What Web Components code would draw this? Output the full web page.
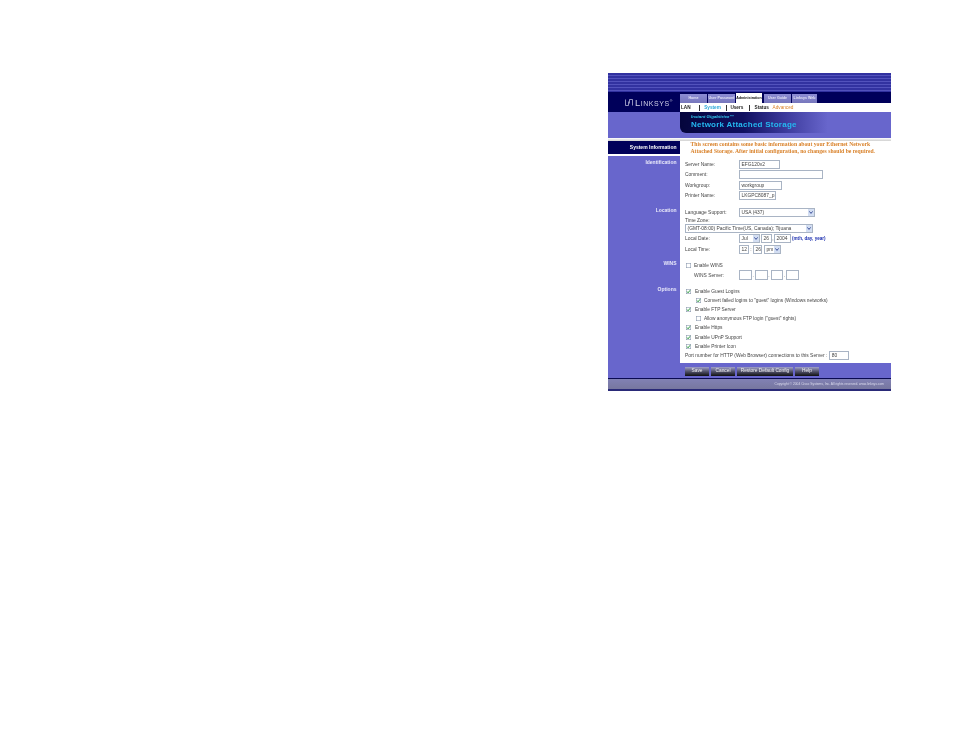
<!DOCTYPE html>
<html>
<head>
<meta charset="utf-8">
<title>System Information</title>
<style>
html, body { margin:0; background:#fff; }
body { padding:73px 0 0 608px; font-family:"Liberation Sans", Arial, sans-serif; height:665px; overflow:hidden; }
</style>
</head>
<body>
<lx-panel>
    <lx-header slot="header"></lx-header>
    <lx-section title="System Information" strong height="15" slot="intro">
        <div style="font:bold 5.67px/6.5px 'Liberation Serif',serif;color:#d9822b;padding:0;white-space:nowrap">This screen contains some basic information about your Ethernet Network<br>Attached Storage. After initial configuration, no changes should be required.</div>
    </lx-section>
    <lx-section title="Identification" height="51" top="3" pad="3">
        <lx-row label="Server Name:" h="10.5"><lx-field w="41">EFG120v2</lx-field></lx-row>
        <lx-row label="Comment:" h="10.5"><lx-field w="84"></lx-field></lx-row>
        <lx-row label="Workgroup:" h="10.5"><lx-field w="43">workgroup</lx-field></lx-row>
        <lx-row label="Printer Name:" h="10.5"><lx-field w="37">LKGPC8087_p1</lx-field></lx-row>
    </lx-section>
    <lx-section title="Location" height="53">
        <lx-row label="Language Support:" h="10"><lx-field select w="76">USA (437)</lx-field></lx-row>
        <lx-row label="Time Zone:" h="6"></lx-row>
        <lx-row h="10"><lx-field select w="128" style="margin-left:-54px">(GMT-08:00) Pacific Time(US, Canada); Tijuana</lx-field></lx-row>
        <lx-row label="Local Date:" h="11">
            <lx-field select w="21">Jul</lx-field><lx-field w="11" style="margin-left:1px">26</lx-field><span style="width:2px;text-align:center">,</span><lx-field w="17">2004</lx-field>
            <span style="font:bold 4.6px 'Liberation Sans',sans-serif;color:#1c2fb0;margin-left:1px;white-space:nowrap">(mth, day, year)</span>
        </lx-row>
        <lx-row label="Local Time:" h="11">
            <lx-field w="10">12</lx-field><span style="width:4px;text-align:center">:</span><lx-field w="9">26</lx-field><lx-field select w="17" style="margin-left:2px">pm</lx-field>
        </lx-row>
    </lx-section>
    <lx-section title="WINS" height="26">
        <lx-check label="Enable WINS" h="10" indent="1" gap="3" open></lx-check>
        <lx-row label="WINS Server:" h="10" indent="9">
            <lx-field w="12.5" tall></lx-field><span style="width:3.5px;text-align:center">.</span><lx-field w="12.5" tall></lx-field><span style="width:3px;text-align:center">.</span><lx-field w="12.5" tall></lx-field><span style="width:3px;text-align:center">.</span><lx-field w="12.5" tall></lx-field>
        </lx-row>
    </lx-section>
    <lx-section title="Options" height="77">
        <lx-check label="Enable Guest Logins" h="10" indent="1"></lx-check>
        <lx-check label="Convert failed logins to &quot;guest&quot; logins (Windows networks)" h="8.5" indent="11" gap="3"></lx-check>
        <lx-check label="Enable FTP Server" h="9.5" indent="1"></lx-check>
        <lx-check label="Allow anonymous FTP login (&quot;guest&quot; rights)" h="9" indent="11" gap="3" open></lx-check>
        <lx-check label="Enable Https" h="9.5" indent="1"></lx-check>
        <lx-check label="Enable UPnP Support" h="9" indent="1"></lx-check>
        <lx-check label="Enable Printer Icon" h="9" indent="1"></lx-check>
        <lx-row h="10.5" wide label="Port number for HTTP (Web Browser) connections to this Server :"><lx-field w="20" style="margin-left:2px">80</lx-field></lx-row>
    </lx-section>
    <lx-footer slot="footer"></lx-footer>
</lx-panel>

<script>
const baseFont = `font-family:"Liberation Sans",Arial,sans-serif;`;

customElements.define('lx-panel', class extends HTMLElement {
    constructor() {
        super();
        this.attachShadow({ mode: 'open' }).innerHTML = `
        <style>
        :host { display:flex; flex-direction:column; width:283px; height:318px; filter:blur(.3px); ${baseFont} }
        #body { flex:1 1 auto; display:flex; flex-direction:column; min-height:0; }
        </style>
        <slot name="header"></slot>
        <slot name="intro"></slot>
        <div id="body"><slot></slot></div>
        <slot name="footer"></slot>
        `;
    }
});

customElements.define('lx-header', class extends HTMLElement {
    constructor() {
        super();
        this.attachShadow({ mode: 'open' }).innerHTML = `
        <style>
        :host { display:block; }
        #stripes {
            height:19px;
            background:repeating-linear-gradient(to bottom,#3232a0 0,#3232a0 2px,#5252bc 2px,#5252bc 3px);
        }
        #top { display:flex; height:20px; background:#00005a; }
        #logo { width:72px; display:flex; align-items:center; gap:2px; padding:0 0 0 17px; box-sizing:border-box; color:#cfcfe6; font-size:9.4px; font-variant:small-caps; letter-spacing:.55px; white-space:nowrap; }
        #nav { flex:1; display:flex; flex-direction:column; }
        #tabs { height:11px; display:flex; align-items:flex-end; }
        .tab { height:9px; line-height:9px; margin-right:1px; background:linear-gradient(to bottom,#8d8dd4,#7676bc); color:#e4e4f6; font-size:3.6px; font-weight:bold; text-align:center; white-space:nowrap; }
        .tab.on { background:#fff; color:#111; height:10px; line-height:10px; margin-right:2px; }
        #sub { height:9px; background:#fff; display:flex; align-items:center; font-size:4.7px; font-weight:bold; color:#222; padding-left:1px; }
        #sub span { white-space:nowrap; flex:none; }
        #sub i { width:.7px; height:6px; background:#333; flex:none; }
        #band { height:26px; display:flex; background:#6866cc; }
        #title { margin-left:72px; flex:1; height:21px; box-sizing:border-box; padding:2px 0 0 11px; border-radius:0 0 0 6px;
            background:linear-gradient(to right,#05053c 0,#101060 30%,#3c3a9c 50%,#6866cc 70%); }
        #title small { display:block; font:italic bold 4.4px/5.5px "Liberation Sans",sans-serif; color:#35c8ee; }
        #title b { display:block; font-size:8px; line-height:9px; color:#24b8f0; letter-spacing:.25px; white-space:nowrap; }
        #rule { height:3px; background:linear-gradient(to bottom,#fff,#d0d0d0); }
        </style>
        <div id="stripes"></div>
        <div id="top">
            <div id="logo">
                <svg width="8" height="7" viewBox="0 0 8 7" fill="none" stroke="#cfcfe6" stroke-width=".7"><path d="M.5.5V6.5H3.5V2.5M7.5 6.5V.5H4.5V4.5"/></svg>
                <span>Linksys<sup style="font-size:3.5px">®</sup></span>
            </div>
            <div id="nav">
                <div id="tabs">
                    <div class="tab" style="width:27px">Home</div>
                    <div class="tab" style="width:27px">User Password</div>
                    <div class="tab on" style="width:26px">Administration</div>
                    <div class="tab" style="width:27px">User Guide</div>
                    <div class="tab" style="width:25px">Linksys Web</div>
                </div>
                <div id="sub">
                    <span style="width:18px">LAN</span><i></i><span style="color:#2aa8d8;margin-left:4.5px;width:21.5px">System</span><i></i><span style="margin-left:4px;width:18.5px">Users</span><i></i><span style="margin-left:5px;width:18px">Status</span><span style="color:#d9822b;font-weight:normal">Advanced</span>
                </div>
            </div>
        </div>
        <div id="band"><div id="title"><small>Instant Gigabitrive™</small><b>Network Attached Storage</b></div></div>
        <div id="rule"></div>
        `;
    }
});

customElements.define('lx-section', class extends HTMLElement {
    constructor() {
        super();
        this.attachShadow({ mode: 'open' }).innerHTML = `
        <style>
        :host { display:grid; grid-template-columns:72px 1fr; flex:none; }
        #head { background:#6866cc; color:#e8e8fa; font-size:5px; font-weight:bold; text-align:right; padding:0 3.5px 0 0; box-sizing:border-box; white-space:nowrap; }
        :host([strong]) #head { background:#00005a; color:#fff; font-size:5px; line-height:13px; height:13px; }
        :host([strong]) #body { padding-left:10.5px; }
        #body { padding-left:5px; color:#444; min-width:0; }
        </style>
        <div id="head"></div>
        <div id="body"><slot></slot></div>
        `;
    }
    connectedCallback() {
        this.style.height = this.getAttribute('height') + 'px';
        const head = this.shadowRoot.querySelector('#head');
        head.textContent = this.getAttribute('title');
        this.removeAttribute('title');
        if (this.hasAttribute('top')) this.shadowRoot.querySelector('#body').style.paddingTop = this.getAttribute('top') + 'px';
        if (this.hasAttribute('pad')) head.style.paddingTop = this.getAttribute('pad') + 'px';
    }
});

customElements.define('lx-row', class extends HTMLElement {
    constructor() {
        super();
        this.attachShadow({ mode: 'open' }).innerHTML = `
        <style>
        :host { display:flex; align-items:center; font-size:4.9px; color:#444; white-space:nowrap; }
        #label { width:54px; flex:none; box-sizing:border-box; }
        :host([wide]) #label { width:auto; }
        #rest { display:flex; align-items:center; }
        </style>
        <span id="label"></span><span id="rest"><slot></slot></span>
        `;
    }
    connectedCallback() {
        this.style.height = this.getAttribute('h') + 'px';
        const label = this.shadowRoot.querySelector('#label');
        label.textContent = this.getAttribute('label') || '';
        const indent = +this.getAttribute('indent') || 0;
        if (indent) label.style.paddingLeft = indent + 'px';
    }
});

customElements.define('lx-field', class extends HTMLElement {
    constructor() {
        super();
        this.attachShadow({ mode: 'open' }).innerHTML = `
        <style>
        :host { display:inline-flex; align-items:center; height:9px; box-sizing:border-box; flex:none;
            border:.7px solid #a9b4c4; background:#fff; font-size:4.9px; color:#444; padding-left:1.5px; overflow:hidden; white-space:nowrap; position:relative; }
        :host([tall]) { height:10px; }
        #arrow { display:none; position:absolute; right:0; top:0; bottom:0; width:6px; background:#d3def2; align-items:center; justify-content:center; }
        :host([select]) #arrow { display:flex; }
        </style>
        <slot></slot>
        <span id="arrow"><svg width="4" height="3" viewBox="0 0 4 3"><path d="M.4.4 2 2.4 3.6.4" fill="none" stroke="#2a3f90" stroke-width=".9"/></svg></span>
        `;
    }
    connectedCallback() {
        this.style.width = this.getAttribute('w') + 'px';
    }
});

customElements.define('lx-check', class extends HTMLElement {
    constructor() {
        super();
        this.attachShadow({ mode: 'open' }).innerHTML = `
        <style>
        :host { display:flex; align-items:center; gap:4px; font-size:4.8px; color:#444; white-space:nowrap; }
        svg { flex:none; width:5px; height:5px; display:block; }
        </style>
        <svg viewBox="0 0 10 10">
            <rect x=".5" y=".5" width="9" height="9" fill="#fff" stroke="#7d8ca4"/>
            <path id="tick" d="M2 5 4.2 7.6 8 2.6" fill="none" stroke="#2c9a40" stroke-width="2"/>
        </svg>
        <span id="text"></span>
        `;
    }
    connectedCallback() {
        this.style.height = this.getAttribute('h') + 'px';
        this.style.paddingLeft = this.getAttribute('indent') + 'px';
        if (this.hasAttribute('gap')) this.style.gap = this.getAttribute('gap') + 'px';
        this.shadowRoot.querySelector('#text').textContent = this.getAttribute('label');
        if (this.hasAttribute('open')) this.shadowRoot.querySelector('#tick').remove();
    }
});

customElements.define('lx-footer', class extends HTMLElement {
    constructor() {
        super();
        this.attachShadow({ mode: 'open' }).innerHTML = `
        <style>
        :host { display:block; }
        #actions { background:#6866cc; display:flex; gap:2px; align-items:center; padding:2px 0 0 77px; box-sizing:border-box; border-bottom:1.5px solid #0a0a50; height:15.5px; }
        button { all:unset; height:9px; background:linear-gradient(to bottom,#a0a0c8,#4a4a62 55%,#111); color:#eee; font:4.8px/8px "Liberation Sans",sans-serif; text-align:center; box-sizing:border-box; white-space:nowrap; }
        #legal { height:10.5px; background:linear-gradient(to bottom,#8181b4,#77779f); color:#dcdcee; font-size:3.3px; line-height:10.5px; text-align:right; padding-right:7px; white-space:nowrap; }
        #end { height:2px; background:#2a2a78; }
        </style>
        <div id="actions">
            <button style="width:24px">Save</button>
            <button style="width:24px">Cancel</button>
            <button style="width:56px">Restore Default Config</button>
            <button style="width:24px">Help</button>
        </div>
        <div id="legal">Copyright © 2004 Cisco Systems, Inc. All rights reserved. www.linksys.com</div>
        <div id="end"></div>
        `;
    }
});
</script>
</body>
</html>
